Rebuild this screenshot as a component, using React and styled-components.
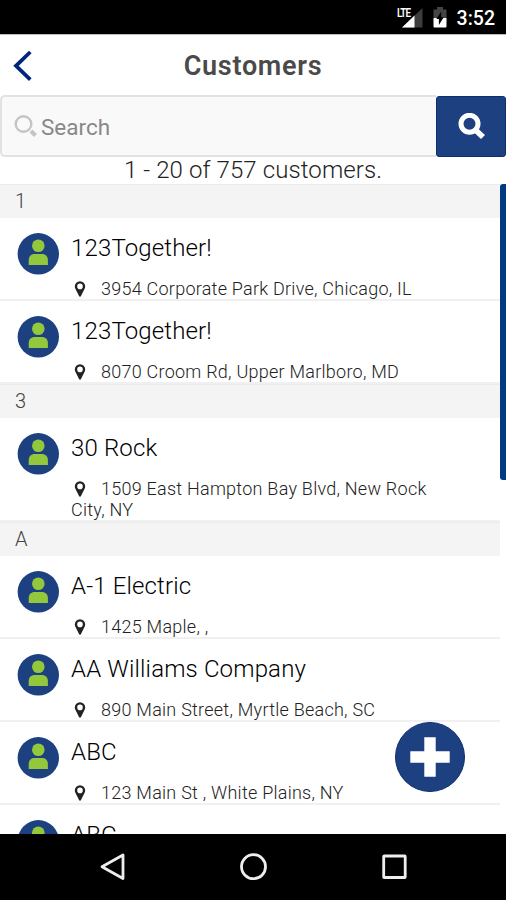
import { styled, createGlobalStyle } from "styled-components";

const sections = [
  {
    letter: "1",
    customers: [
      { name: "123Together!", address: "3954 Corporate Park Drive, Chicago, IL" },
      { name: "123Together!", address: "8070 Croom Rd, Upper Marlboro, MD" },
    ],
  },
  {
    letter: "3",
    customers: [
      {
        name: "30 Rock",
        address: "1509 East Hampton Bay Blvd, New Rock City, NY",
      },
    ],
  },
  {
    letter: "A",
    customers: [
      { name: "A-1 Electric", address: "1425 Maple, ," },
      { name: "AA Williams Company", address: "890 Main Street, Myrtle Beach, SC" },
      { name: "ABC", address: "123 Main St , White Plains, NY" },
      { name: "ABC", address: "" },
    ],
  },
];

function PersonIcon() {
  return (
    <Avatar width="42" height="42" viewBox="0 0 42 42">
      <circle cx="21.3" cy="20.8" r="20.7" fill="#1c4080" />
      <circle cx="21.3" cy="12.8" r="6.3" fill="#93c83d" />
      <path
        d="M11.700 32v-4.600c0-4.200 2.600-6.300 6-6.300h7.200c3.400 0 6 2.100 6 6.300v4.600z"
        fill="#93c83d"
      />
    </Avatar>
  );
}

function PinIcon() {
  return (
    <svg width="12" height="16" viewBox="0 0 12 16">
      <path
        d="M6 0.2a5.200 5.200 0 0 0-5.200 5.200c0 1 .3 1.700.6 2.400L5 15a1.100 1.100 0 0 0 2 0l3.600-7.200c.3-.7.6-1.400.6-2.400A5.200 5.200 0 0 0 6 .2zm0 2.400a2.800 2.800 0 1 1 0 5.600 2.800 2.800 0 0 1 0-5.600z"
        fill="#222"
        fillRule="evenodd"
      />
    </svg>
  );
}

function Customer({ customer }) {
  return (
    <Row>
      <PersonIcon />
      <Details>
        <Name>{customer.name}</Name>
        <Address>
          <PinIcon />
          {customer.address}
        </Address>
      </Details>
    </Row>
  );
}

function App() {
  return (
    <>
      <GlobalStyle />
      <Screen>
        <StatusBar>
          <SignalIcon width="26" height="22" viewBox="0 0 26 22">
            <path d="M25.500 1v19.500H5z" fill="#3d3d3d" />
            <path d="M17.500 8.500v12H5z" fill="#fff" />
            <LteText x="0" y="8" transform="scale(0.980 1.200)">
              LTE
            </LteText>
          </SignalIcon>
          <BatteryIcon width="14" height="21" viewBox="0 0 14 21">
            <path d="M4 0h6v2.500h3.500V11H.5V2.500H4z" fill="#444" />
            <path d="M.5 11h13v8.500a1 1 0 0 1-1 1h-11a1 1 0 0 1-1-1z" fill="#fff" />
            <path d="M8.200 4.500v5.700h2.500L5.900 18v-5.900H3.400z" fill="#000" />
          </BatteryIcon>
          <Clock>3:52</Clock>
        </StatusBar>
        <Header>
          <BackIcon width="20" height="32" viewBox="0 0 20 32">
            <path
              d="M17.300 2L3 15.800l14.300 13.800"
              fill="none"
              stroke="#00257a"
              strokeWidth="3.800"
            />
          </BackIcon>
          <Title>Customers</Title>
        </Header>
        <SearchBar>
          <SearchField>
            <svg width="24" height="24" viewBox="0 0 24 24" fill="none" stroke="#c4c4c4">
              <circle cx="9.500" cy="9" r="7.800" strokeWidth="2.400" />
              <path d="M17 16l4.500 4.500" strokeWidth="4" />
            </svg>
            <Placeholder>Search</Placeholder>
          </SearchField>
          <SearchButton>
            <svg width="28" height="28" viewBox="0 0 28 28" fill="none" stroke="#fff">
              <circle cx="12.500" cy="10.800" r="8.500" strokeWidth="5" />
              <path d="M18.500 17l7.500 7" strokeWidth="5.800" />
            </svg>
          </SearchButton>
        </SearchBar>
        <Count>1 - 20 of 757 customers.</Count>
        <Content>
          <List>
            {sections.map((section) => (
              <section key={section.letter}>
                <Divider>{section.letter}</Divider>
                {section.customers.map((customer, i) => (
                  <Customer key={i} customer={customer} />
                ))}
              </section>
            ))}
          </List>
          <ScrollThumb />
          <AddButton>
            <svg width="40" height="40" viewBox="0 0 40 40">
              <path
                d="M14.300 0.300h11.400v14h14v11.400h-14v14H14.300v-14h-14V14.300h14z"
                fill="#fff"
              />
            </svg>
          </AddButton>
        </Content>
        <NavBar>
          <svg width="28" height="30" viewBox="0 0 28 30">
            <path d="M24 3v23.500L3 14.700z" {...navStroke} />
          </svg>
          <svg width="28" height="30" viewBox="0 0 28 30">
            <circle cx="14.500" cy="14.700" r="12" {...navStroke} />
          </svg>
          <svg width="28" height="30" viewBox="0 0 28 30">
            <rect x="3.700" y="4" width="21.500" height="21.500" rx="0.500" {...navStroke} />
          </svg>
        </NavBar>
      </Screen>
    </>
  );
}

const navStroke = {
  fill: "none",
  stroke: "#eee",
  strokeWidth: 2.8,
  strokeLinejoin: "round",
};

const GlobalStyle = createGlobalStyle`
  * {
    box-sizing: border-box;
  }
  body {
    margin: 0;
    background: #fff;
    font-family: Roboto, sans-serif;
  }
  svg {
    display: block;
    flex-shrink: 0;
  }
`;
const Screen = styled.div`
  display: flex;
  flex-direction: column;
  width: 506px;
  height: 900px;
  overflow: hidden;
  background: #fff;
`;
const StatusBar = styled.div`
  display: flex;
  justify-content: flex-end;
  align-items: center;
  height: 34px;
  flex-shrink: 0;
  padding: 1px 11px 0 0;
  background: #000;
`;
const SignalIcon = styled.svg`
  overflow: visible;
`;
const LteText = styled.text`
  font-size: 10px;
  font-weight: 600;
  letter-spacing: -0.8px;
  fill: #fff;
`;
const BatteryIcon = styled.svg`
  margin-left: 10px;
`;
const Clock = styled.span`
  margin: 2px 0 0 10px;
  font-size: 19.5px;
  font-weight: 500;
  color: #fff;
`;
const Header = styled.header`
  display: grid;
  grid-template-columns: 50px 1fr 50px;
  align-items: center;
  height: 61px;
  flex-shrink: 0;
  border-top: 1px solid #bbb;
`;
const BackIcon = styled.svg`
  margin: 2px 0 0 13px;
`;
const Title = styled.h1`
  margin: 2px 0 0;
  font-size: 27px;
  font-weight: 600;
  text-align: center;
  letter-spacing: 0.7px;
  color: #4a4a4a;
`;
const SearchBar = styled.div`
  display: flex;
  height: 62px;
  flex-shrink: 0;
`;
const SearchField = styled.div`
  display: flex;
  align-items: center;
  flex: 1;
  gap: 3px;
  padding: 2px 0 0 12px;
  border: 2px solid #e2e2e2;
  border-right: none;
  border-radius: 5px 0 0 5px;
  background: #f9f9f9;
`;
const Placeholder = styled.span`
  font-size: 22.5px;
  color: #888;
`;
const SearchButton = styled.button`
  display: flex;
  align-items: center;
  justify-content: center;
  width: 70px;
  margin-top: 1px;
  padding: 0;
  border: 1px solid #0d2f70;
  border-radius: 3px;
  background: #1c4080;
`;
const Count = styled.p`
  height: 27px;
  flex-shrink: 0;
  margin: 0;
  font-size: 24px;
  font-weight: 300;
  line-height: 26px;
  letter-spacing: 0.1px;
  text-align: center;
  color: #222;
`;
const Content = styled.main`
  position: relative;
  height: 650px;
  overflow: hidden;
`;
const List = styled.div`
  width: 500px;
`;
const Divider = styled.div`
  height: 34px;
  padding-left: 15px;
  border-top: 1px solid #ebebeb;
  background: #f4f4f4;
  font-size: 20px;
  font-weight: 300;
  line-height: 33px;
  color: #444;
`;
const Row = styled.div`
  display: flex;
  gap: 12px;
  padding: 14px 60px 0 17px;
  border-bottom: 2px solid #f0f0f0;
`;
const Avatar = styled.svg`
  margin-top: 1px;
`;
const Details = styled.div`
  flex: 1;
`;
const Name = styled.h2`
  margin: 2px 0 13px;
  font-size: 24px;
  font-weight: 300;
  line-height: 28px;
  letter-spacing: 0.15px;
  color: #000;
`;
const Address = styled.p`
  margin: 0;
  min-height: 24px;
  padding-top: 3px;
  font-size: 18px;
  font-weight: 300;
  line-height: 21px;
  letter-spacing: 0.25px;
  color: #222;

  svg {
    display: inline-block;
    margin: 0 15px 0 3px;
    vertical-align: -2px;
  }
`;
const ScrollThumb = styled.div`
  position: absolute;
  top: 0;
  right: 0;
  width: 6px;
  height: 296px;
  border-radius: 3px 0 0 3px;
  background: #003a80;
`;
const AddButton = styled.button`
  position: absolute;
  left: 395px;
  top: 538px;
  display: flex;
  align-items: center;
  justify-content: center;
  width: 70px;
  height: 70px;
  padding: 0;
  border: 1px solid #0d2f70;
  border-radius: 50%;
  background: #1c4080;
`;
const NavBar = styled.nav`
  display: flex;
  justify-content: center;
  align-items: center;
  gap: 112.5px;
  flex: 1;
  background: #000;
`;

export default App;
